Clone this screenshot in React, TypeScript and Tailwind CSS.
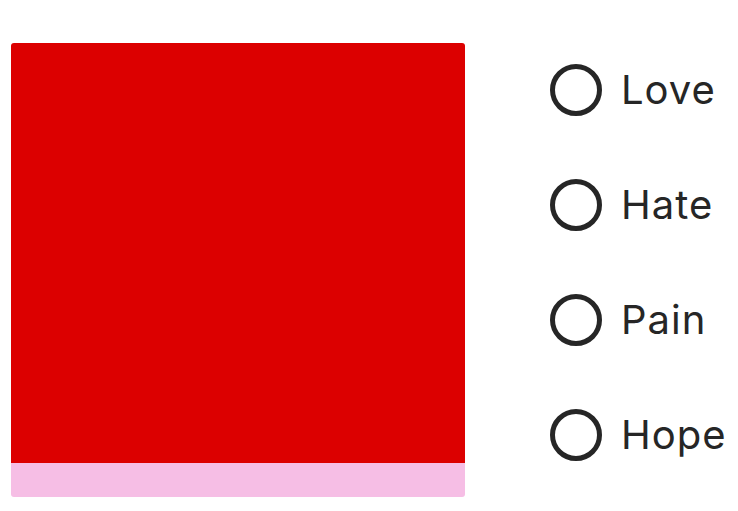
import { useState } from "react";

const OPTIONS = ["Love", "Hate", "Pain", "Hope"];

export default function App() {
  const [picked, setPicked] = useState<string | null>(null);

  return (
    <div className="flex w-[738px] h-[511px] bg-white pl-[11px] pt-[43px] font-['Inter','Liberation_Sans',sans-serif] text-[#262626]">
      {/* Colour card */}
      <div className="flex flex-col w-[454px] h-[454px] rounded-[3px] overflow-hidden">
        <div className="flex-1 bg-[#dc0000]" />
        <div className="h-[34px] bg-[#f6bee5]" />
      </div>

      {/* Radio list */}
      <div className="flex flex-col ml-[85px] mt-[22px] gap-[65px]">
        {OPTIONS.map((opt) => (
          <label
            key={opt}
            className="flex items-center gap-[19px] h-[50px] cursor-pointer"
            onClick={() => setPicked(opt)}
          >
            <span className="flex items-center justify-center w-[52px] h-[52px] rounded-full border-[5px] border-[#262626]">
              {picked === opt && <span className="w-[25px] h-[25px] rounded-full bg-[#262626]" />}
            </span>
            <span className="text-[40px] font-normal tracking-[0.025em] leading-none">{opt}</span>
          </label>
        ))}
      </div>
    </div>
  );
}
